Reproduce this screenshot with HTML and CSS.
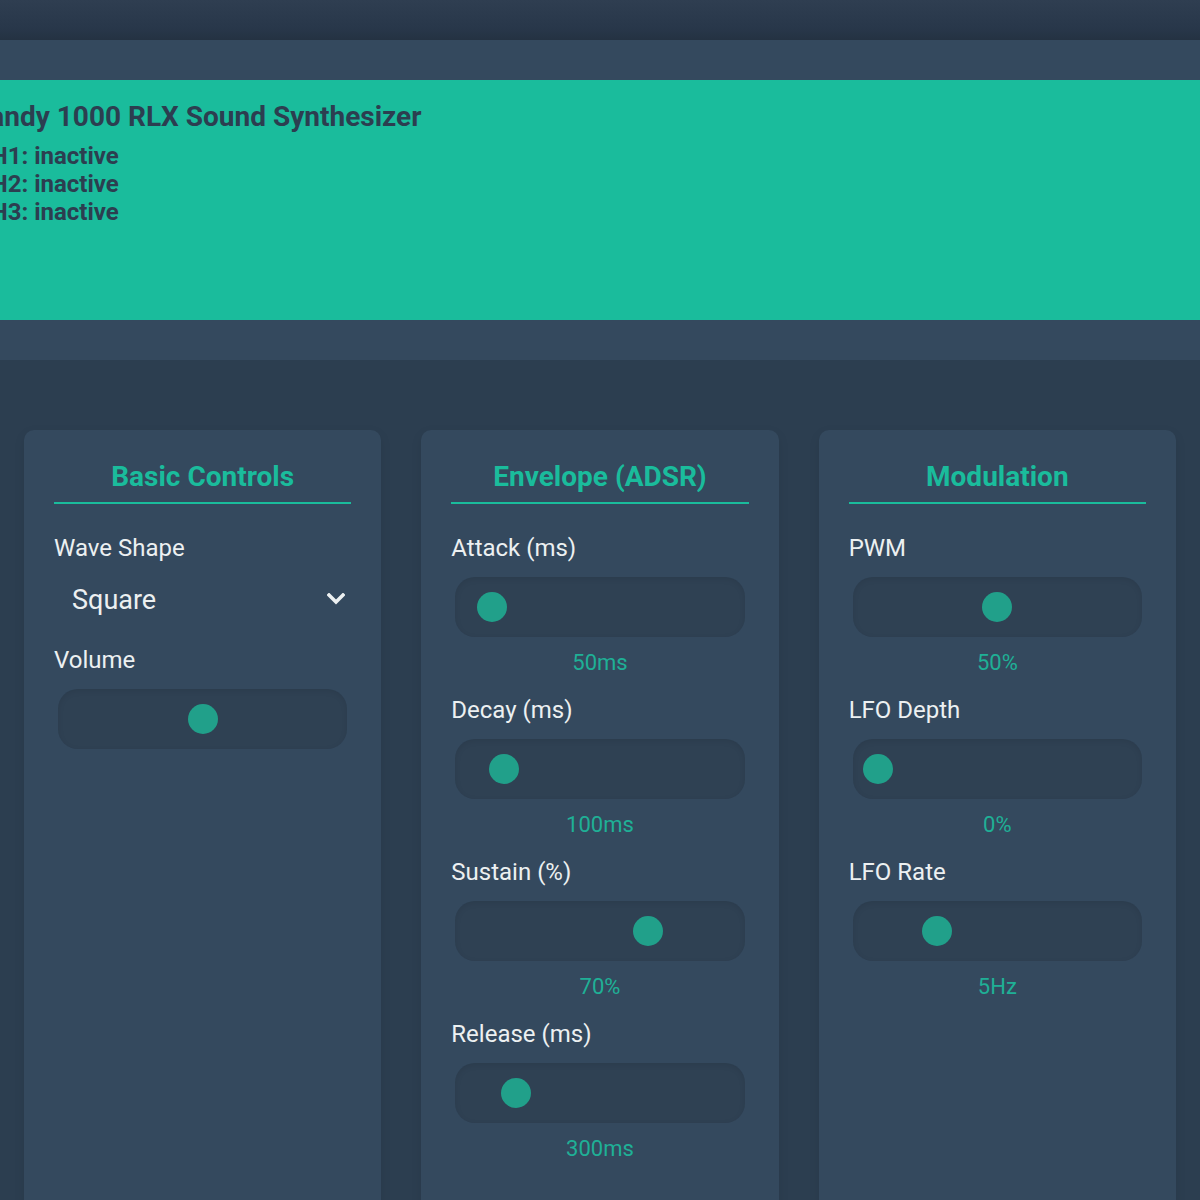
FILE: index.html
```html
<!DOCTYPE html>
<html lang="en">
<head>
  <meta charset="UTF-8" />
  <meta name="viewport" content="width=device-width, initial-scale=1" />
  <title>Tandy 1000 RLX Sound Synthesizer</title>

  <link rel="stylesheet" href="styles.css">
</head>
<body>
  <div class="topbar"></div>

  <header class="header">
    <div class="display">
      <h1 class="title">Tandy 1000 RLX Sound Synthesizer</h1>
      <div class="channels">
        <div id="ch1">CH1: inactive</div>
        <div id="ch2">CH2: inactive</div>
        <div id="ch3">CH3: inactive</div>
      </div>
    </div>
  </header>

  <main class="panels">
    <section class="panel">
      <h2>Basic Controls</h2>

      <div class="control">
        <label for="wave">Wave Shape</label>
        <div class="select-wrap">
          <select id="wave">
            <option>Square</option>
            <option>Triangle</option>
            <option>Sawtooth</option>
            <option>Noise</option>
          </select>
          <svg class="chevron" width="18" height="12" viewBox="0 0 18 12">
            <path d="M2 2 L9 9 L16 2" fill="none" stroke="#ecf0f1" stroke-width="3.5" stroke-linecap="square" />
          </svg>
        </div>
      </div>

      <div class="control">
        <label for="volume">Volume</label>
        <input type="range" id="volume" min="0" max="100" value="50" />
      </div>
    </section>

    <section class="panel">
      <h2>Envelope (ADSR)</h2>

      <div class="control">
        <label for="attack">Attack (ms)</label>
        <input type="range" id="attack" min="0" max="1000" value="50" />
        <div class="value">50ms</div>
      </div>

      <div class="control">
        <label for="decay">Decay (ms)</label>
        <input type="range" id="decay" min="0" max="1000" value="100" />
        <div class="value">100ms</div>
      </div>

      <div class="control">
        <label for="sustain">Sustain (%)</label>
        <input type="range" id="sustain" min="0" max="100" value="70" />
        <div class="value">70%</div>
      </div>

      <div class="control">
        <label for="release">Release (ms)</label>
        <input type="range" id="release" min="0" max="2000" value="300" />
        <div class="value">300ms</div>
      </div>
    </section>

    <section class="panel">
      <h2>Modulation</h2>

      <div class="control">
        <label for="pwm">PWM</label>
        <input type="range" id="pwm" min="0" max="100" value="50" />
        <div class="value">50%</div>
      </div>

      <div class="control">
        <label for="lfoDepth">LFO Depth</label>
        <input type="range" id="lfoDepth" min="0" max="100" value="0" />
        <div class="value">0%</div>
      </div>

      <div class="control">
        <label for="lfoRate">LFO Rate</label>
        <input type="range" id="lfoRate" min="0" max="20" value="5" />
        <div class="value">5Hz</div>
      </div>
    </section>
  </main>
</body>
</html>
```

FILE: styles.css
```css
:root {
  --verde: #1abc9c;
  --verde-escuro: #21a08a;
  --fundo: #2c3e50;
  --painel: #34495e;
  --trilho: #2f4153;
  --texto: #ecf0f1;
}

* {
  box-sizing: border-box;
  margin: 0;
  padding: 0;
}

body {
  font-family: Roboto, "Liberation Sans", sans-serif;
  background: var(--fundo);
  color: var(--texto);
  overflow: hidden;
}

.topbar {
  height: 40px;
  background: linear-gradient(to bottom, #2f3e51, #28374a 70%, #243242);
}

.header {
  background: var(--painel);
  padding: 40px 0;
}

.display {
  background: var(--verde);
  height: 240px;
  padding-top: 20px;
  color: var(--fundo);
  font-weight: 700;
}

.title {
  font-size: 28px;
  font-weight: 700;
  margin-left: -26px;
  margin-bottom: 9px;
}

.channels {
  font-size: 24px;
  line-height: 28px;
  margin-left: -25px;
}

.panels {
  display: grid;
  grid-template-columns: repeat(3, 1fr);
  gap: 40px;
  padding: 70px 24px 0;
}

.panel {
  background: var(--painel);
  border-radius: 10px;
  padding: 30px 30px 40px;
  min-height: 800px;
  box-shadow: 0 4px 12px rgba(0, 0, 0, 0.08);
}

.panel h2 {
  color: var(--verde);
  font-size: 28px;
  font-weight: 700;
  text-align: center;
  padding-bottom: 9px;
  border-bottom: 2px solid var(--verde);
  margin-bottom: 30px;
}

.control {
  margin-bottom: 21px;
}

label {
  display: block;
  font-size: 24px;
  margin-bottom: 15px;
}

.select-wrap {
  position: relative;
}

select {
  appearance: none;
  -webkit-appearance: none;
  width: 100%;
  height: 48px;
  padding: 0 18px 3px;
  background: transparent;
  border: none;
  color: var(--texto);
  font-family: inherit;
  font-size: 27px;
  outline: none;
}

.chevron {
  position: absolute;
  right: 6px;
  top: 16px;
  pointer-events: none;
}

input[type="range"] {
  -webkit-appearance: none;
  appearance: none;
  display: block;
  width: calc(100% - 8px);
  height: 60px;
  margin: 0 4px;
  padding: 0 10px;
  border-radius: 20px;
  background: var(--trilho);
  box-shadow: inset 0 2px 6px rgba(0, 0, 0, 0.08);
  outline: none;
  cursor: pointer;
}

input[type="range"]::-webkit-slider-thumb {
  -webkit-appearance: none;
  appearance: none;
  width: 30px;
  height: 30px;
  border-radius: 50%;
  background: var(--verde-escuro);
  border: none;
}

.value {
  color: #1fb096;
  font-size: 22px;
  text-align: center;
  margin-top: 13px;
}
```
